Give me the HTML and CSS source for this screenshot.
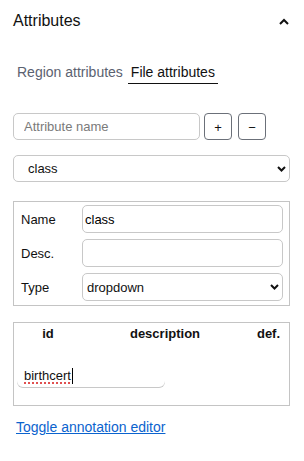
FILE: index.html
```html
<!DOCTYPE html>
<html>
<head>
<meta charset="utf-8">
<link rel="stylesheet" href="styles.css">
</head>
<body>
<div class="panel">
  <div class="header">
    <span class="title">Attributes</span>
    <svg class="caret" width="10" height="7" viewBox="0 0 10 7"><polyline points="1,6 5,2 9,6" fill="none" stroke="#111" stroke-width="2"/></svg>
  </div>
  <div class="tabs">
    <span class="tab">Region attributes</span>
    <span class="tab active">File attributes</span>
  </div>
  <div class="add-row">
    <input class="text-input attr-name" placeholder="Attribute name">
    <button class="btn">+</button>
    <button class="btn btn-minus">−</button>
  </div>
  <div class="select-wrap main-select">
    <select class="select"><option>class</option></select>
    <svg class="chev" width="9" height="6" viewBox="0 0 9 6"><polyline points="1,1 4.5,4.5 8,1" fill="none" stroke="#111" stroke-width="2"/></svg>
  </div>
  <div class="props">
    <span class="prop-label">Name</span>
    <input class="prop-input" value="class">
    <span class="prop-label">Desc.</span>
    <input class="prop-input">
    <span class="prop-label">Type</span>
    <div class="select-wrap type-select">
      <select class="select"><option>dropdown</option></select>
      <svg class="chev" width="9" height="6" viewBox="0 0 9 6"><polyline points="1,1 4.5,4.5 8,1" fill="none" stroke="#111" stroke-width="2"/></svg>
    </div>
  </div>
  <div class="options">
    <div class="opt-head">
      <span>id</span>
      <span>description</span>
      <span>def.</span>
    </div>
    <div class="opt-row">
      <div class="opt-input"><span class="spell">birthcert</span><span class="cursor"></span></div>
    </div>
  </div>
  <a class="toggle" href="#">Toggle annotation editor</a>
</div>
</body>
</html>
```
FILE: styles.css
```css
* { box-sizing: border-box; }
html, body { margin: 0; padding: 0; background: #fff; }
body {
  font-family: "Liberation Sans", Arial, sans-serif;
  font-size: 13px;
  color: #111;
  width: 304px;
  height: 461px;
  overflow: hidden;
}
.panel {
  padding: 0 14px 0 13px;
  display: flex;
  flex-direction: column;
}
.header {
  display: flex;
  justify-content: space-between;
  align-items: center;
  padding-top: 10px;
  height: 31px;
}
.title {
  font-size: 16px;
  line-height: 20px;
  color: #111;
}
.caret { margin-right: 1px; margin-top: 1px; }
.tabs {
  display: flex;
  gap: 2px;
  margin-top: 32px;
  padding-left: 1px;
}
.tab {
  font-size: 14px;
  line-height: 18px;
  padding: 0 3px 2px;
  color: #5b6270;
  border-bottom: 1px solid transparent;
}
.tab.active {
  color: #111;
  border-bottom: 1px solid #111;
}
.add-row {
  display: flex;
  margin-top: 29px;
}
.text-input {
  font-family: inherit;
  font-size: 13px;
  height: 27px;
  border: 1px solid #c8c8c8;
  border-radius: 5px;
  padding: 0 10px;
  outline: none;
}
.text-input::placeholder { color: #7a7a7a; }
.attr-name { width: 187px; }
.btn {
  width: 28px;
  height: 27px;
  margin-left: 4px;
  border: 1px solid #6b7079;
  border-radius: 4px;
  background: #fff;
  font-family: inherit;
  font-size: 13px;
  color: #111;
  padding: 0;
  padding-top: 2px;
}
.btn-minus { margin-left: 6px; }
.select-wrap { position: relative; }
.select {
  appearance: none;
  -webkit-appearance: none;
  width: 100%;
  height: 27px;
  border: 1px solid #c8c8c8;
  border-radius: 5px;
  background: #fff;
  font-family: inherit;
  font-size: 13px;
  color: #111;
  outline: none;
}
.main-select { margin-top: 15px; }
.main-select .select { padding-left: 14px; }
.chev {
  position: absolute;
  right: 4px;
  top: 11px;
}
.props {
  margin-top: 19px;
  border: 1px solid #c4c4c4;
  padding: 3px 6px 4px 0;
  display: grid;
  grid-template-columns: 68px 1fr;
  row-gap: 6px;
  align-items: center;
}
.prop-label {
  padding-left: 7px;
  font-size: 13px;
  padding-top: 1px;
}
.prop-input {
  font-family: inherit;
  font-size: 13px;
  height: 28px;
  border: 1px solid #c8c8c8;
  border-radius: 5px;
  padding: 0 2px;
  outline: none;
  width: 100%;
}
.type-select .select { height: 28px; padding-left: 4px; }
.type-select .chev { top: 11px; }
.options {
  margin-top: 16px;
  border: 1px solid #c4c4c4;
  height: 84px;
  padding-top: 2px;
}
.opt-head {
  display: grid;
  grid-template-columns: 68px 166px 1fr;
  font-weight: bold;
  font-size: 13px;
  line-height: 17px;
  text-align: center;
}
.opt-row {
  margin-top: 22px;
  padding-left: 3px;
}
.opt-input {
  width: 148px;
  height: 24px;
  padding-left: 7px;
  display: flex;
  align-items: center;
  border-radius: 0 0 6px 6px;
  box-shadow: inset 0 -1px 0 #c8c8c8;
  font-size: 13px;
  line-height: 16px;
}
.spell {
  text-decoration: underline dotted #e05050;
  text-decoration-thickness: 2px;
  text-underline-offset: 2px;
}
.cursor {
  display: inline-block;
  width: 1px;
  height: 16px;
  background: #000;
  margin-left: 1px;
}
.toggle {
  margin-top: 13px;
  padding-left: 3px;
  font-size: 14px;
  line-height: 16px;
  color: #0b63ce;
  text-decoration: underline;
  align-self: flex-start;
}
```
